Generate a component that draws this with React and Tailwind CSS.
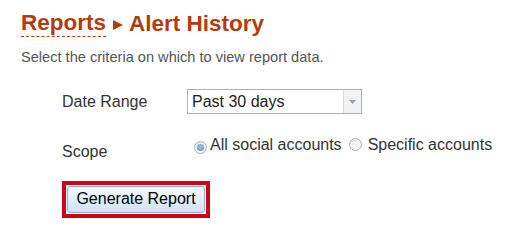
import React from "react";

function Radio({ checked }) {
  return (
    <span className="inline-flex w-[13px] h-[13px] rounded-full border border-[#a9b0b8] bg-gradient-to-b from-[#e9ebee] to-[#fafbfc] items-center justify-center shrink-0">
      {checked && (
        <span className="w-[7px] h-[7px] rounded-full bg-[radial-gradient(circle_at_50%_40%,#a9cbef,#4f86c6)]" />
      )}
    </span>
  );
}

export default function App() {
  return (
    <div className="w-[530px] h-[240px] bg-white font-['Liberation_Sans',Arial,sans-serif] pl-[21px] pt-[10px]">
      <h1 className="flex items-center text-[22.5px] leading-[27px] font-bold text-[#b33c0c] whitespace-nowrap">
        <span className="border-b border-dashed border-[#b33c0c] leading-[26px]">Reports</span>
        <svg width="10" height="10" viewBox="0 0 10 10" className="ml-[7px] mr-[6px] mt-[2px]">
          <polygon points="0,0 10,5 0,10" fill="#b33c0c" />
        </svg>
        <span>Alert History</span>
      </h1>
      <p className="mt-[11px] text-[14.6px] leading-[18px] text-[#555]">
        Select the criteria on which to view report data.
      </p>

      <div className="ml-[41px] mt-[23px] text-[16px] text-[#333]">
        <div className="flex items-center h-[25px]">
          <div className="w-[125px] leading-[18px]">Date Range</div>
          <div className="flex w-[175px] h-[25px] border border-[#a8b0bc] bg-white">
            <div className="flex-1 pl-[4px] flex items-center text-[#222] leading-[18px]">Past 30 days</div>
            <div className="w-[18px] h-full border-l border-[#dcdcdc] bg-[#f2f2f2] flex items-center justify-center">
              <svg width="7" height="4" viewBox="0 0 7 4">
                <polygon points="0,0 7,0 3.5,4" fill="#8ea3c2" />
              </svg>
            </div>
          </div>
        </div>

        <div className="flex items-start mt-[21px]">
          <div className="w-[125px] mt-[8px] leading-[18px]">Scope</div>
          <div className="flex items-center ml-[7px] leading-[18px] whitespace-nowrap">
            <span className="mt-[2px]"><Radio checked /></span>
            <span className="ml-[3px]">All social accounts</span>
            <span className="ml-[7px] mt-[2px]"><Radio /></span>
            <span className="ml-[6px]">Specific accounts</span>
          </div>
        </div>

        <div className="mt-[20px] flex">
          <div className="border-4 border-[#d0021b] p-[1px]">
            <button className="h-[27px] w-[138px] rounded-[3px] border border-[#8fb0d3] bg-gradient-to-b from-[#f3f8fd] to-[#cfe3f6] text-[16px] text-black leading-[18px] pb-[2px]">
              Generate Report
            </button>
          </div>
        </div>
      </div>
    </div>
  );
}
